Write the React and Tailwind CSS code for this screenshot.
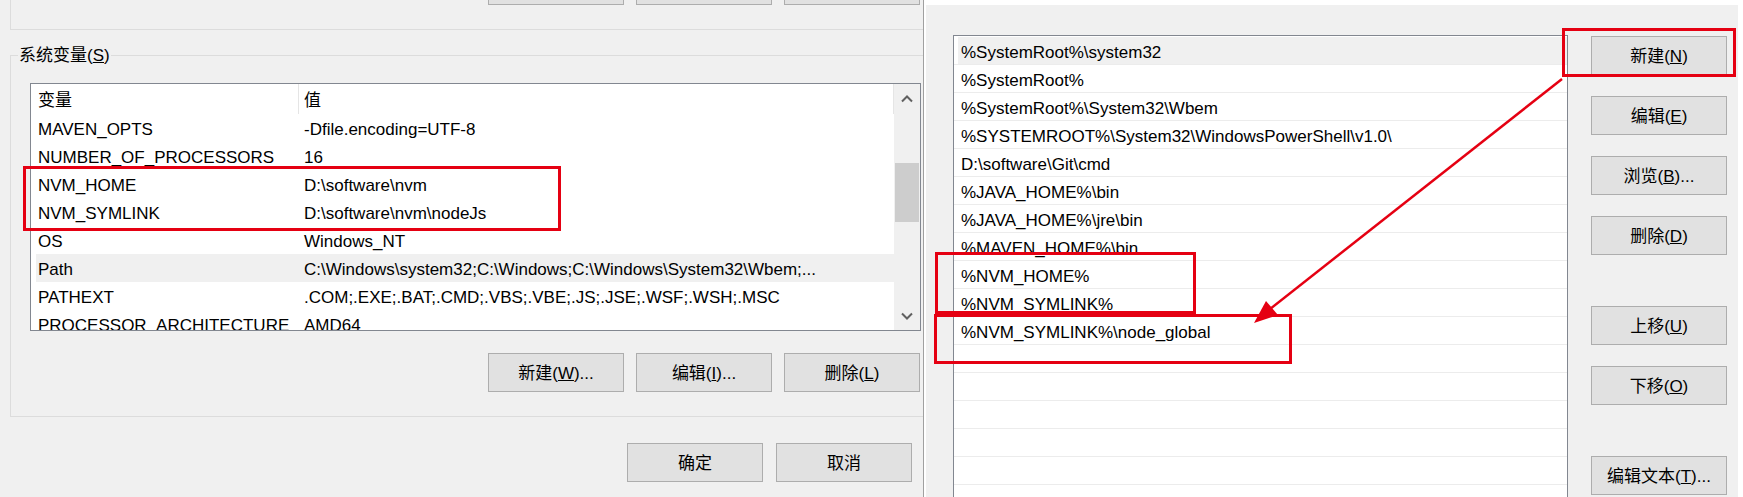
import React from "react";

const font = { fontFamily: '"Liberation Sans", "Noto Sans CJK SC", sans-serif' };

const Btn = ({ children, className = "" }) => (
  <div
    className={`w-[136px] h-[39px] shrink-0 bg-[#e1e1e1] border border-[#adadad] flex items-center justify-center pt-[2px] text-[17px] text-black ${className}`}
  >
    {children}
  </div>
);

const sysVars = [
  ["MAVEN_OPTS", "-Dfile.encoding=UTF-8"],
  ["NUMBER_OF_PROCESSORS", "16"],
  ["NVM_HOME", "D:\\software\\nvm"],
  ["NVM_SYMLINK", "D:\\software\\nvm\\nodeJs"],
  ["OS", "Windows_NT"],
  ["Path", "C:\\Windows\\system32;C:\\Windows;C:\\Windows\\System32\\Wbem;..."],
  ["PATHEXT", ".COM;.EXE;.BAT;.CMD;.VBS;.VBE;.JS;.JSE;.WSF;.WSH;.MSC"],
  ["PROCESSOR_ARCHITECTURE", "AMD64"],
];

const pathItems = [
  "%SystemRoot%\\system32",
  "%SystemRoot%",
  "%SystemRoot%\\System32\\Wbem",
  "%SYSTEMROOT%\\System32\\WindowsPowerShell\\v1.0\\",
  "D:\\software\\Git\\cmd",
  "%JAVA_HOME%\\bin",
  "%JAVA_HOME%\\jre\\bin",
  "%MAVEN_HOME%\\bin",
  "%NVM_HOME%",
  "%NVM_SYMLINK%",
  "%NVM_SYMLINK%\\node_global",
  "",
  "",
  "",
  "",
  "",
  "",
];

const Chevron = ({ down }) => (
  <svg width="12" height="8" viewBox="0 0 12 8">
    <polyline
      points={down ? "1,1.5 6,6.5 11,1.5" : "1,6.5 6,1.5 11,6.5"}
      fill="none"
      stroke="#606060"
      strokeWidth="2"
    />
  </svg>
);

const LeftWindow = () => (
  <div className="w-[924px] h-full shrink-0 bg-[#f0f0f0] border-r border-[#a0a0a0] flex flex-col">
    {/* user variables group (cut off) */}
    <div className="ml-[10px] h-[30px] border-l border-b border-[#dcdcdc] flex items-start justify-end gap-[12px] pr-[3px]">
      <Btn className="-mt-[34px]" />
      <Btn className="-mt-[34px]" />
      <Btn className="-mt-[34px]" />
    </div>

    {/* system variables group */}
    <div className="ml-[10px] mt-[25px] h-[362px] border-l border-t border-b border-[#dcdcdc] flex flex-col">
      <div className="-mt-[12px] ml-[7px] self-start px-[1px] bg-[#f0f0f0] text-[17px] leading-[24px] text-black">
        系统变量(<u>S</u>)
      </div>
      <div className="ml-[19px] mt-[15px] w-[891px] h-[248px] border border-[#828790] bg-white flex">
        <div className="flex-1 overflow-hidden text-[17px] text-black">
          <div className="h-[30px] flex items-center border-r border-[#e5e5e5]">
            <div className="w-[268px] h-full border-r border-[#e5e5e5] pl-[7px] pt-[3px] flex items-center">变量</div>
            <div className="pl-[5px] pt-[3px]">值</div>
          </div>
          {sysVars.map(([k, v]) => (
            <div
              key={k}
              className={`ml-[5px] h-[28px] pt-[4px] flex items-center whitespace-nowrap ${k === "Path" ? "bg-[#f0f0f0]" : ""}`}
            >
              <div className="w-[263px] pl-[2px]">{k}</div>
              <div className="pl-[5px]">{v}</div>
            </div>
          ))}
        </div>
        <div className="w-[26px] bg-[#f0f0f0] flex flex-col items-center">
          <div className="h-[30px] flex items-center">
            <Chevron />
          </div>
          <div className="mt-[49px] w-[24px] h-[59px] bg-[#cdcdcd]" />
          <div className="flex-1" />
          <div className="h-[28px] flex items-center">
            <Chevron down />
          </div>
        </div>
      </div>
      <div className="mt-[22px] flex justify-end gap-[12px] pr-[3px]">
        <Btn>
          新建(<u>W</u>)...
        </Btn>
        <Btn>
          编辑(<u>I</u>)...
        </Btn>
        <Btn>
          删除(<u>L</u>)
        </Btn>
      </div>
    </div>

    <div className="mt-[26px] flex justify-end gap-[13px] pr-[11px]">
      <Btn>确定</Btn>
      <Btn>取消</Btn>
    </div>
  </div>
);

const RightWindow = () => (
  <div className="ml-[2px] mt-[5px] w-[812px] h-[492px] shrink-0 bg-[#f0f0f0] flex">
    <div className="ml-[27px] mt-[30px] w-[615px] border-l border-t border-r border-[#828790] bg-white overflow-hidden">
      <div className="pt-[1px] text-[17px] text-black">
        {pathItems.map((p, i) => (
          <div key={i} className="h-[28px] border-b border-[#ececec] pl-[4px]">
            <div className={`h-full pl-[3px] pt-[4px] flex items-center whitespace-nowrap ${i === 0 ? "bg-[#f0f0f0]" : ""}`}>
              {p}
            </div>
          </div>
        ))}
      </div>
    </div>
    <div className="ml-[23px] pt-[31px] flex flex-col">
      <Btn>
        新建(<u>N</u>)
      </Btn>
      <Btn className="mt-[21px]">
        编辑(<u>E</u>)
      </Btn>
      <Btn className="mt-[21px]">
        浏览(<u>B</u>)...
      </Btn>
      <Btn className="mt-[21px]">
        删除(<u>D</u>)
      </Btn>
      <Btn className="mt-[51px]">
        上移(<u>U</u>)
      </Btn>
      <Btn className="mt-[21px]">
        下移(<u>O</u>)
      </Btn>
      <Btn className="mt-[51px]">
        编辑文本(<u>T</u>)...
      </Btn>
    </div>
  </div>
);

export default function App() {
  return (
    <div className="relative w-[1743px] h-[497px] overflow-hidden bg-white flex" style={font}>
      <LeftWindow />
      <RightWindow />

      {/* annotations */}
      <div className="absolute left-[23px] top-[166px] w-[538px] h-[65px] border-[3px] border-[#e50012] pointer-events-none" />
      <div className="absolute left-[935px] top-[252px] w-[261px] h-[62px] border-[3px] border-[#e50012] pointer-events-none" />
      <div className="absolute left-[934px] top-[314px] w-[358px] h-[50px] border-[3px] border-[#e50012] pointer-events-none" />
      <div className="absolute left-[1562px] top-[28px] w-[174px] h-[49px] border-[3px] border-[#e50012] pointer-events-none" />
      <svg className="absolute left-0 top-0 pointer-events-none" width="1743" height="497">
        <line x1="1562" y1="79" x2="1270" y2="309" stroke="#e50012" strokeWidth="2.5" />
        <polygon points="1254,323 1266,301 1278,315" fill="#e50012" />
      </svg>
    </div>
  );
}
